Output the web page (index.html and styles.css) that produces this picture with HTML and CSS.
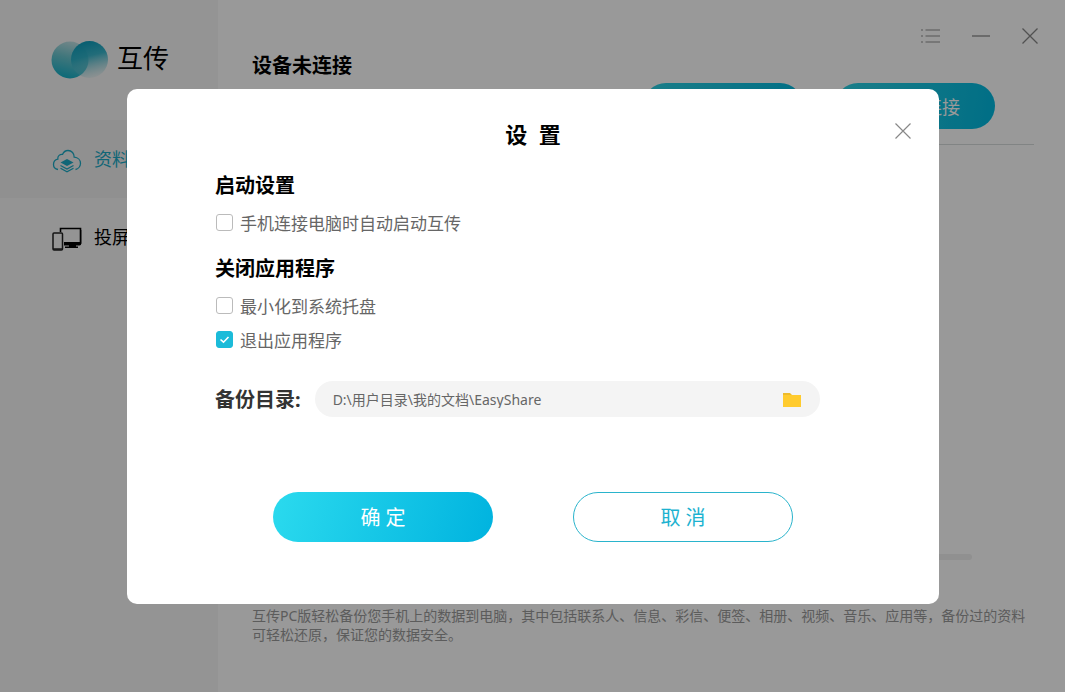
FILE: index.html
```
<!DOCTYPE html>
<html lang="zh-CN">
	<head>
		<meta charset="UTF-8">
		<title>互传</title>
		<link rel="stylesheet" href="styles.css">
	</head>

	<body>
		<div class="app">
			<div class="sidebar">
				<div class="logo">
					<svg width="58" height="38" viewBox="0 0 58 38">
						<defs>
							<linearGradient id="g1" x1="0.65" y1="0" x2="0.4" y2="1">
								<stop offset="0" stop-color="#c4e2e5" />
								<stop offset="0.45" stop-color="#6cc6cf" />
								<stop offset="1" stop-color="#14b0c8" />
							</linearGradient>
							<linearGradient id="g2" x1="0.4" y1="0" x2="0.65" y2="1">
								<stop offset="0" stop-color="#0c9dbc" />
								<stop offset="0.4" stop-color="#25aec6" stop-opacity="0.9" />
								<stop offset="1" stop-color="#8fd0d8" stop-opacity="0.1" />
							</linearGradient>
						</defs>
						<circle cx="19" cy="19" r="18.5" fill="url(#g1)" />
						<circle cx="38.5" cy="18.5" r="18.5" fill="url(#g2)" />
					</svg>
					<span>互传</span>
				</div>
				<a class="nav_item active" href="#">
					<svg width="30" height="24" viewBox="0 0 30 24" fill="none" stroke="#1cabc6" stroke-width="1.3">
						<path d="M6 20.500C3 20 1.500 18 1.500 15.500C1.500 12.500 3.500 10.500 5.800 10.100C5.500 6.800 8 5 10.500 5.400C11.500 3 13.500 1.500 16 1.500C19.800 1.500 22.300 4.500 22.200 8.200C26 8.500 28.500 11 28.500 14.200C28.500 17.500 26 20 23.500 20.500" />
						<path d="M15 10L21.500 13.500L15 17L8.500 13.500Z" fill="#1cabc6" stroke="none" />
						<path d="M8.500 16.500L15 20L21.500 16.500M8.500 19.200L15 22.700L21.500 19.200" />
					</svg>
					<span>资料备份</span>
				</a>
				<a class="nav_item" href="#">
					<svg width="30" height="24" viewBox="0 0 30 24">
						<path d="M8.500 5V1.500H28.500V17" fill="none" stroke="#000" stroke-width="1.600" />
						<path d="M28.500 15H12V18.500H27.500Q29.300 18.500 29.300 16V3H28Z" />
						<path d="M17 18H24V19.500H26V21H13V19.500H17Z" />
						<rect x="1" y="6" width="9.500" height="17" rx="1" fill="none" stroke="#222" stroke-width="1.500" />
						<path d="M1 22H10.500" stroke="#222" stroke-width="1.500" />
					</svg>
					<span>投屏</span>
				</a>
			</div>

			<div class="main">
				<div class="header">
					<h1>设备未连接</h1>
					<div class="header_right">
						<div class="win_btns">
							<button aria-label="菜单">
								<svg width="20" height="16" viewBox="0 0 20 16" stroke="#b4b4b4" stroke-width="1.500"><path d="M1 2H3M1 8H3M1 14H3M5.500 2H20M5.500 8H20M5.500 14H20" /></svg>
							</button>
							<button aria-label="最小化">
								<svg width="18" height="16" viewBox="0 0 18 16" stroke="#999" stroke-width="1.500"><path d="M0 8H18" /></svg>
							</button>
							<button aria-label="关闭">
								<svg width="16" height="16" viewBox="0 0 16 16" stroke="#888" stroke-width="1.300"><path d="M0.500 0.500L15.500 15.500M15.500 0.500L0.500 15.500" /></svg>
							</button>
						</div>
						<div class="actions">
							<button>USB连接</button>
							<button>二维码连接</button>
						</div>
					</div>
				</div>
				<div class="bar"></div>
				<p class="tips">互传PC版轻松备份您手机上的数据到电脑，其中包括联系人、信息、彩信、便签、相册、视频、音乐、应用等，备份过的资料可轻松还原，保证您的数据安全。</p>
			</div>
		</div>

		<!-- 设置弹窗 -->
		<div class="mask">
			<form class="dialog" role="dialog" aria-labelledby="dialog_title">
				<button type="button" class="close" aria-label="关闭设置">
					<svg width="16" height="16" viewBox="0 0 16 16" stroke="#888" stroke-width="1.200"><path d="M0.500 0.500L15.500 15.500M15.500 0.500L0.500 15.500" /></svg>
				</button>
				<h2 id="dialog_title">设&nbsp;&nbsp;置</h2>
				<div class="dialog_body">
					<h3>启动设置</h3>
					<label class="option"><input type="checkbox">手机连接电脑时自动启动互传</label>
					<h3>关闭应用程序</h3>
					<label class="option"><input type="checkbox">最小化到系统托盘</label>
					<label class="option"><input type="checkbox" checked>退出应用程序</label>
					<div class="path_row">
						<label for="path">备份目录:</label>
						<div class="path_box">
							<input type="text" id="path" value="D:\用户目录\我的文档\EasyShare" readonly>
							<button type="button" aria-label="选择目录">
								<svg width="18" height="16" viewBox="0 0 18 16">
									<path d="M0 2H7L9 4H18V9H0Z" fill="#eebb2b" />
									<path d="M0 4H18V16H0Z" fill="#ffcb2e" />
								</svg>
							</button>
						</div>
					</div>
				</div>
				<div class="dialog_btns">
					<button type="button" class="ok">确 定</button>
					<button type="button" class="cancel">取 消</button>
				</div>
			</form>
		</div>
	</body>
</html>
```
FILE: styles.css
```
*{
	margin: 0;
	padding: 0;
	box-sizing: border-box;
}

body, button, input {
	font-family: "Noto Sans", "Noto Sans CJK SC", sans-serif;
}

button {
	border: 0;
	background: none;
	cursor: pointer;
}

svg {
	display: block;
	flex-shrink: 0;
}

.app {
	display: flex;
	min-height: 100vh;
	background-color: #fff;
}

/* 左侧导航 */
.sidebar {
	width: 218px;
	flex-shrink: 0;
	background-color: #f7f7f7;
}

.logo {
	display: flex;
	align-items: center;
	gap: 8px;
	height: 120px;
	padding-left: 51px;
	font-size: 26px;
	line-height: 36px;
}

.logo span {
	padding-bottom: 4px;
}

.nav_item {
	display: flex;
	align-items: center;
	gap: 12px;
	height: 78px;
	padding-left: 52px;
	color: #000;
	font-size: 18px;
	text-decoration: none;
}

.nav_item span {
	padding-bottom: 2px;
}

.nav_item svg {
	margin-top: 4px;
}

.nav_item.active {
	background-color: #f0f0f0;
	color: #1cabc6;
}

/* 右侧内容 */
.main {
	flex: 1;
	display: flex;
	flex-direction: column;
	padding: 0 27px 48px 34px;
}

.header {
	display: flex;
	justify-content: space-between;
	margin-right: 4px;
	padding-bottom: 15px;
	border-bottom: 1px solid #d8dcdd;
}

.header h1 {
	margin-top: 51px;
	font-size: 20px;
	line-height: 30px;
}

.header_right {
	display: flex;
	flex-direction: column;
	gap: 39px;
	padding-top: 28px;
}

.win_btns {
	display: flex;
	justify-content: flex-end;
	gap: 32px;
	margin-right: -4px;
}

.actions {
	display: flex;
	gap: 32px;
	padding-right: 39px;
}

.actions button {
	width: 160px;
	height: 46px;
	border-radius: 23px;
	background: linear-gradient(100deg, #2ed3e4 0%, #00b8df 100%);
	color: #fff;
	font-size: 18px;
}

.bar {
	height: 6px;
	margin: auto 66px 46px 58px;
	border-radius: 3px;
	background-color: #f0f0f0;
}

.tips {
	color: #999;
	font-size: 14px;
	line-height: 19px;
}

/* 弹窗 */
.mask {
	position: fixed;
	top: 0;
	right: 0;
	bottom: 0;
	left: 0;
	display: flex;
	align-items: center;
	padding: 0 126px 0 127px;
	background-color: rgba(0, 0, 0, .4);
}

.dialog {
	position: relative;
	flex: 1;
	padding: 30px 0 62px;
	border-radius: 10px;
	background-color: #fff;
}

.close {
	position: absolute;
	top: 34px;
	right: 28px;
}

.dialog h2 {
	font-size: 22px;
	line-height: 30px;
	text-align: center;
}

.dialog_body {
	padding: 22px 119px 0 88px;
}

.dialog h3 {
	margin-bottom: 5px;
	font-size: 20px;
	line-height: 30px;
}

.option + h3 {
	margin-top: 14px;
}

.option {
	display: flex;
	align-items: center;
	gap: 7px;
	height: 34px;
	color: #666;
	font-size: 17px;
}

.option input {
	appearance: none;
	width: 17px;
	height: 17px;
	margin-left: 1px;
	border: 1px solid #bbb;
	border-radius: 3px;
}

.option input:checked {
	border-color: #1bbbd9;
	background: #1bbbd9 url("data:image/svg+xml,%3Csvg xmlns='http://www.w3.org/2000/svg' viewBox='0 0 15 15'%3E%3Cpath d='M3.500 7.500L6.500 10.200L11.500 5' fill='none' stroke='white' stroke-width='1.600'/%3E%3C/svg%3E") center no-repeat;
}

.path_row {
	display: flex;
	align-items: center;
	gap: 14px;
	margin-top: 24px;
}

.path_row label {
	padding-top: 2px;
	color: #333;
	font-size: 20px;
	font-weight: bold;
	line-height: 30px;
}

.path_box {
	flex: 1;
	display: flex;
	align-items: center;
	height: 36px;
	padding: 0 19px 0 18px;
	border-radius: 18px;
	background-color: #f4f4f4;
}

.path_box input {
	flex: 1;
	min-width: 0;
	border: 0;
	outline: none;
	background: none;
	color: #666;
	font-size: 14px;
}

.dialog_btns {
	display: flex;
	justify-content: center;
	gap: 80px;
	margin-top: 75px;
}

.dialog_btns button {
	width: 220px;
	height: 50px;
	border-radius: 25px;
	font-size: 20px;
}

.dialog_btns .ok {
	background: linear-gradient(105deg, #2bdaee 0%, #00b3df 100%);
	color: #fff;
}

.dialog_btns .cancel {
	border: 1px solid #2ab4cc;
	color: #1cb2d0;
}
```
